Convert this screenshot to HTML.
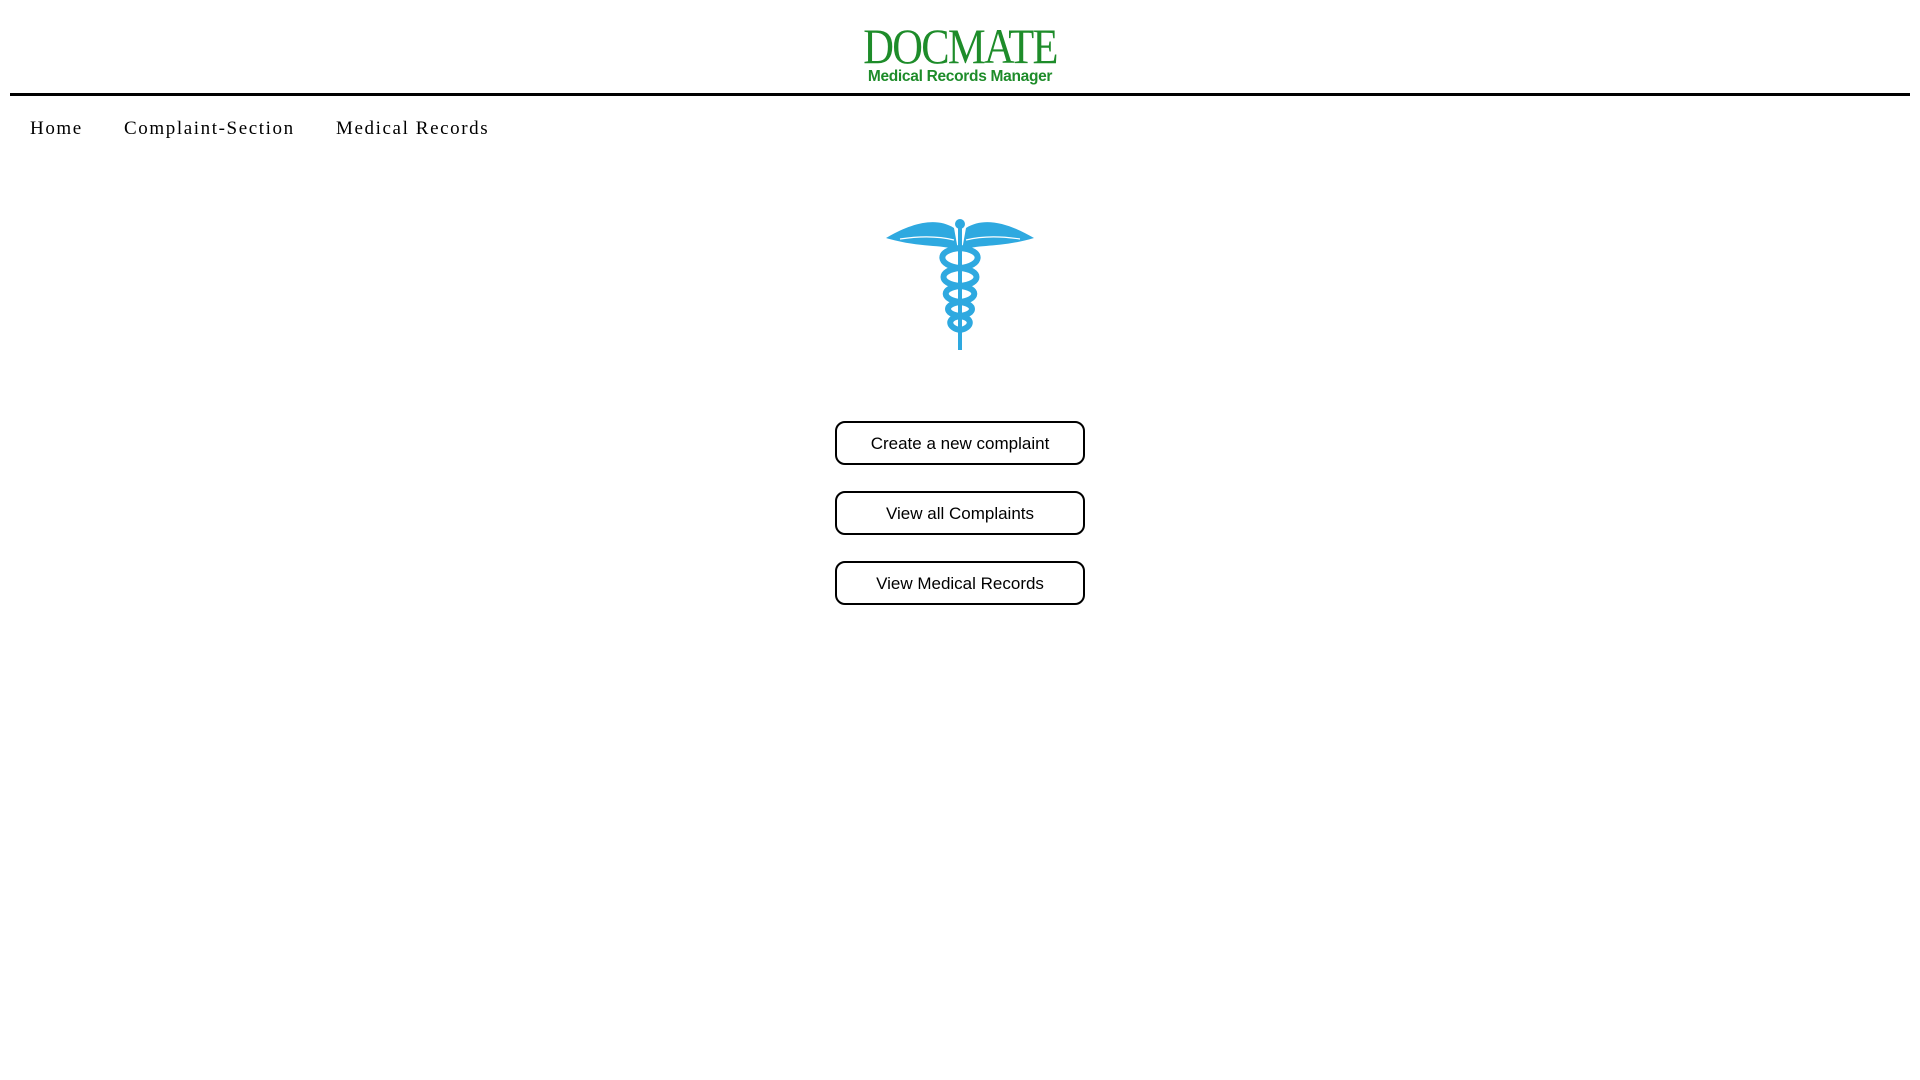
<!DOCTYPE html>
<html><head><style>
body{margin:0;background:#fff;width:1920px;height:1080px;position:relative;overflow:hidden}
.logo{position:absolute;left:0;width:1920px;text-align:center}
.t1{top:18px;font-family:"Liberation Serif",serif;color:#1e8c2a;font-size:50px;letter-spacing:-2px;line-height:56px;transform:scaleX(0.85)}
.t2{top:67px;font-family:"Liberation Sans",sans-serif;font-weight:bold;color:#1e8c2a;font-size:15.5px;letter-spacing:-0.3px;line-height:20px}
.line{position:absolute;left:10px;width:1900px;top:93px;height:3px;background:#000}
.nav{position:absolute;top:118px;font-family:"Liberation Serif",serif;font-size:19px;letter-spacing:1.6px;color:#000}
.btn{position:absolute;left:835px;width:246px;height:40px;border:2px solid #000;border-radius:10px;font-family:"Liberation Sans",sans-serif;font-size:17px;text-align:center;line-height:42px}
</style></head><body>
<div class="logo t1">DOCMATE</div>
<div class="logo t2">Medical Records Manager</div>
<div class="line"></div>
<div class="nav" style="left:30px">Home</div>
<div class="nav" style="left:124px">Complaint-Section</div>
<div class="nav" style="left:336px">Medical Records</div>
<svg style="position:absolute;left:880px;top:214px" width="160" height="140" viewBox="0 0 160 140">
<g fill="#2ea9e0">
<path d="M6 24 C30 10 55 2 74 14 L78 36 C60 30 40 34 6 24Z"/>
<path d="M154 24 C130 10 105 2 86 14 L82 36 C100 30 120 34 154 24Z"/>
<circle cx="80" cy="10" r="5"/>
<rect x="78" y="14" width="4" height="122"/>
</g>
<g fill="none" stroke="#fff" stroke-width="1.2">
<path d="M20 25 C40 22 58 22 74 26"/><path d="M140 25 C120 22 102 22 86 26"/>
</g>
<g fill="none" stroke="#2ea9e0" stroke-width="6">
<path d="M80 34 C55 36 58 52 80 54 C102 56 102 70 80 72 C60 74 62 86 80 88 C96 90 96 100 80 102 C66 104 68 114 80 116"/>
<path d="M80 34 C105 36 102 52 80 54 C58 56 58 70 80 72 C100 74 98 86 80 88 C64 90 64 100 80 102 C94 104 92 114 80 116"/>
</g>
</svg>
<div class="btn" style="top:421px">Create a new complaint</div>
<div class="btn" style="top:491px">View all Complaints</div>
<div class="btn" style="top:561px">View Medical Records</div>
</body></html>
